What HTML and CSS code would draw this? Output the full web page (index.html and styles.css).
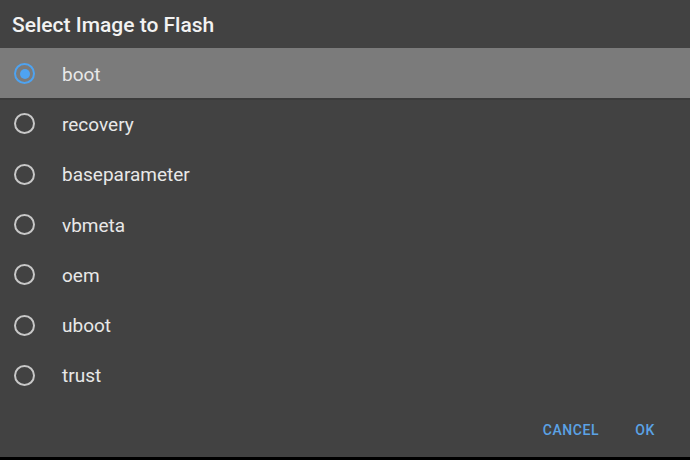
FILE: index.html
```html
<!DOCTYPE html>
<html>
<head>
<meta charset="utf-8">
<link rel="stylesheet" href="styles.css">
</head>
<body>
<div class="dialog">
  <div class="title">Select Image to Flash</div>
  <div class="list">
    <div class="row selected"><span class="radio on"></span><span class="label">boot</span></div>
    <div class="row"><span class="radio"></span><span class="label">recovery</span></div>
    <div class="row"><span class="radio"></span><span class="label">baseparameter</span></div>
    <div class="row"><span class="radio"></span><span class="label">vbmeta</span></div>
    <div class="row"><span class="radio"></span><span class="label">oem</span></div>
    <div class="row"><span class="radio"></span><span class="label">uboot</span></div>
    <div class="row"><span class="radio"></span><span class="label">trust</span></div>
  </div>
  <div class="actions">
    <span class="btn">CANCEL</span>
    <span class="btn">OK</span>
  </div>
</div>
<div class="bottom"></div>
</body>
</html>
```
FILE: styles.css
```css
html, body {
  margin: 0;
  padding: 0;
  width: 690px;
  height: 460px;
  background: #424242;
  font-family: Roboto, "Noto Sans", sans-serif;
  overflow: hidden;
}
.dialog {
  height: 457px;
  display: flex;
  flex-direction: column;
}
.title {
  height: 48px;
  box-sizing: border-box;
  padding: 13px 0 0 12px;
  font-size: 21px;
  font-weight: 500;
  color: #f2f2f2;
  line-height: 24px;
}
.list {
  display: flex;
  flex-direction: column;
}
.row {
  height: 50.3px;
  box-sizing: border-box;
  display: flex;
  align-items: center;
}
.row.selected {
  background: #7b7b7b;
  border-bottom: 2px solid #3b3b3b;
  padding-bottom: 0;
  height: 52px;
  margin-bottom: -1.7px;
}
.radio {
  width: 17px;
  height: 17px;
  border: 2px solid #c8c8c8;
  border-radius: 50%;
  margin-left: 14px;
  margin-top: 1px;
  position: relative;
}
.radio.on {
  border-color: #4ea3f1;
}
.radio.on::after {
  content: "";
  position: absolute;
  left: 3.5px;
  top: 3.5px;
  width: 10px;
  height: 10px;
  border-radius: 50%;
  background: #4ea3f1;
}
.label {
  margin-left: 27px;
  font-size: 19px;
  color: #e8e8e8;
  padding-top: 2px;
}
.actions {
  margin-top: auto;
  height: 38px;
  display: flex;
  justify-content: flex-end;
  align-items: flex-start;
  padding-right: 35px;
  gap: 36px;
}
.btn {
  font-size: 14px;
  font-weight: 500;
  color: #5ba2e6;
  letter-spacing: 0.6px;
  line-height: 16px;
  padding-top: 3px;
}
.bottom {
  height: 3px;
  background: #000;
}
```
